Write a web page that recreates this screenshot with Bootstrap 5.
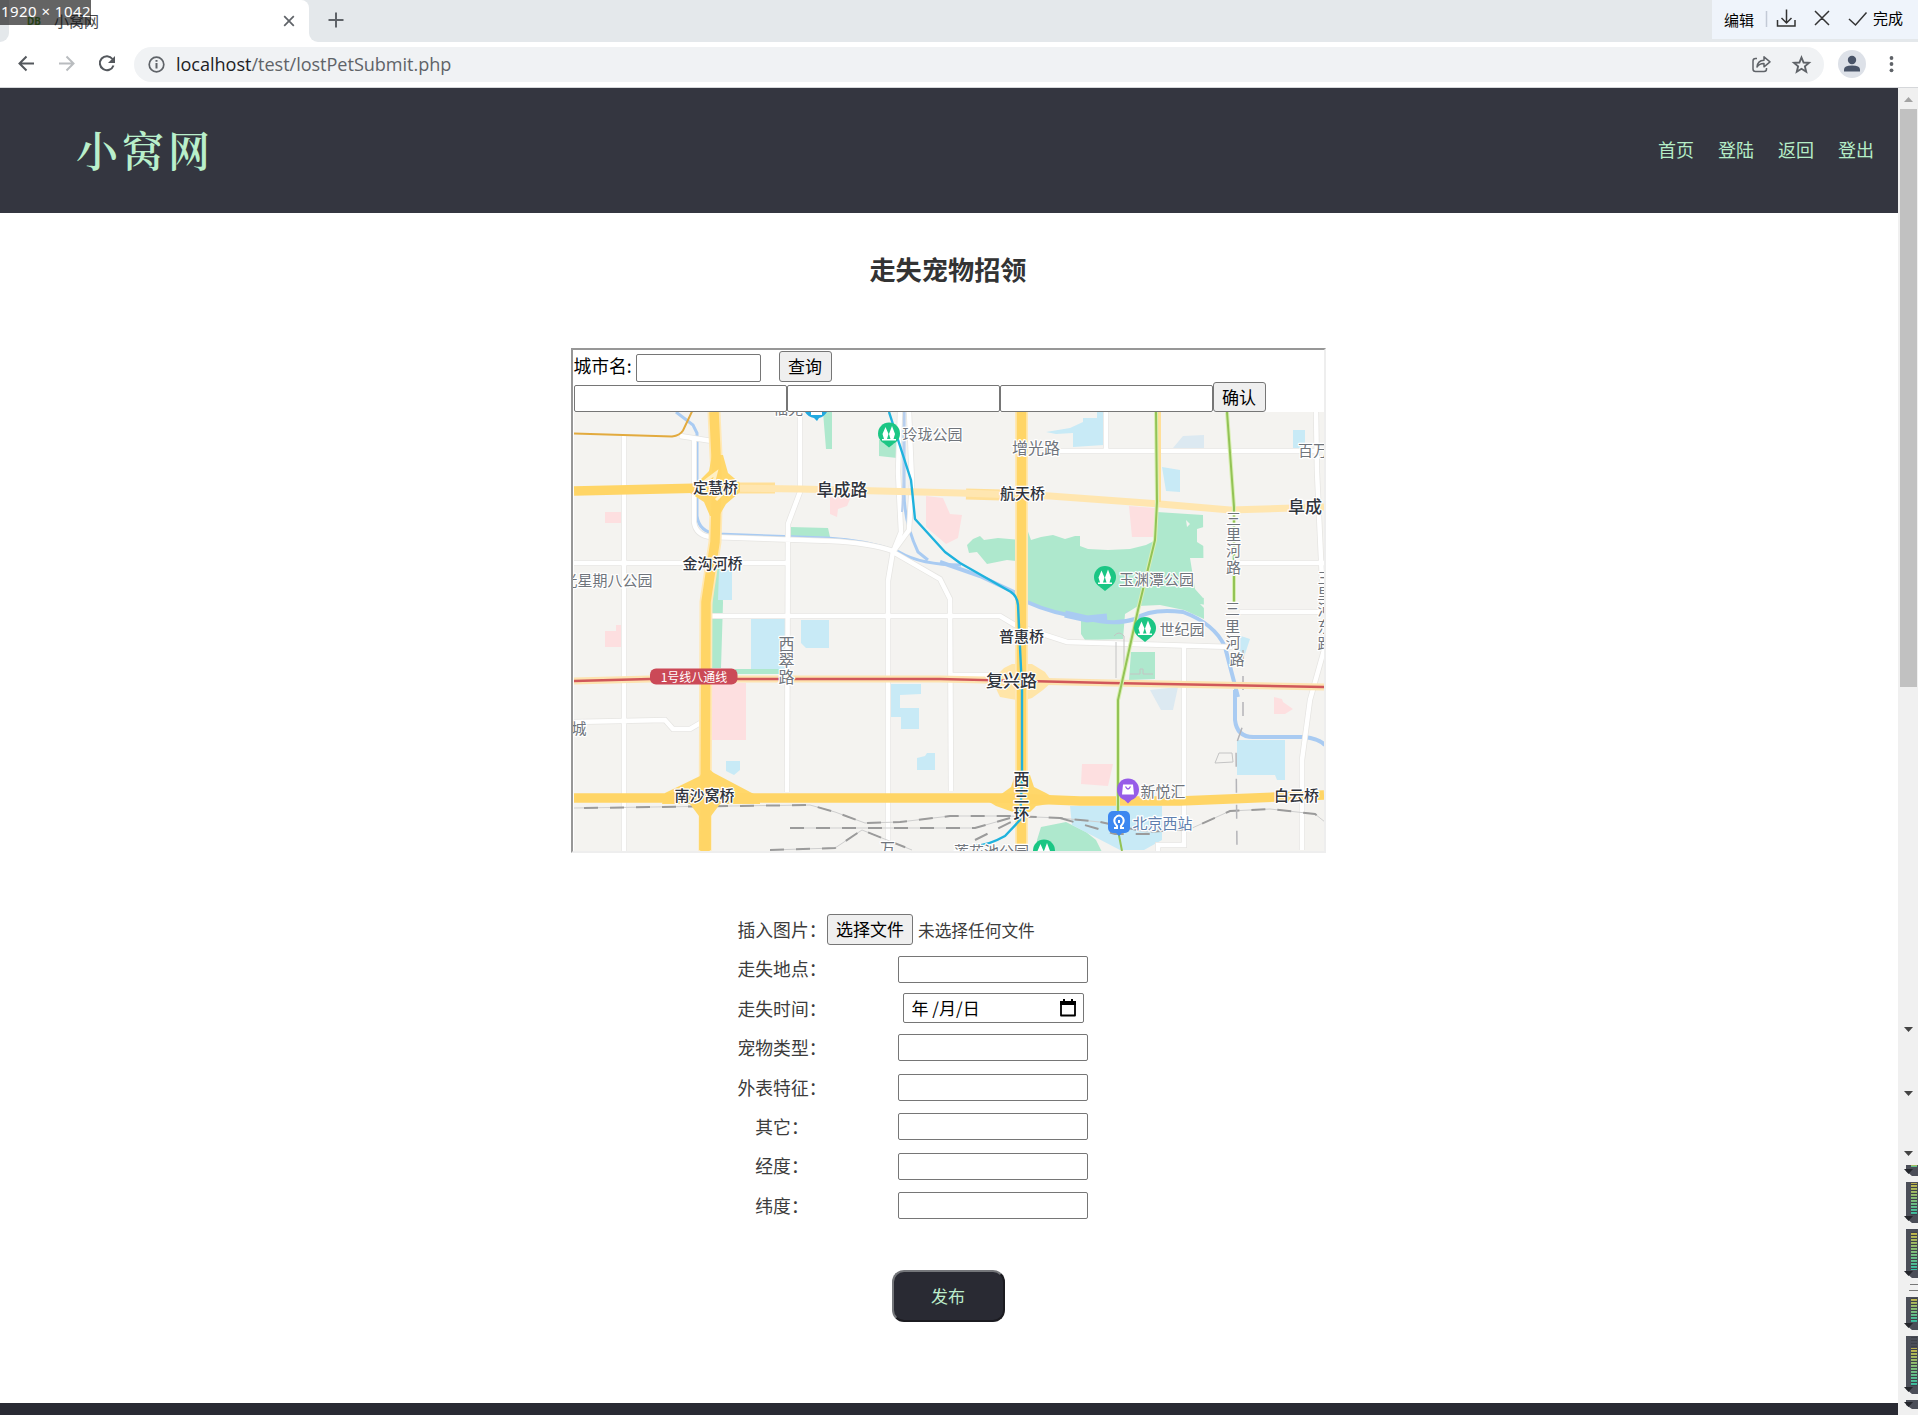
<!DOCTYPE html>
<html lang="zh-CN">
<head>
<meta charset="utf-8">
<title>小窝网</title>
<link href="https://cdn.jsdelivr.net/npm/bootstrap@5.3.0/dist/css/bootstrap.min.css" rel="stylesheet">
<style>
body{font-family:"Open Sans","Noto Sans CJK SC",sans-serif;background:#fff;height:1415px;overflow:hidden;color:#000;line-height:1.2}
svg{display:block}
.cjk{font-family:"Noto Sans CJK SC",sans-serif;font-weight:400}
.tabstrip{height:42px;background:#e4e8eb}
.strip-left{width:9px;background:#fff}
.strip-left i{display:block;height:42px;background:#e4e8eb;border-bottom-right-radius:9px}
.tab-active{width:300px;background:#fff;border-top-right-radius:8px;padding:0 14px 0 18px}
.strip-rest{background:#fff}
.strip-rest>div{height:42px;background:#e4e8eb;border-bottom-left-radius:9px;padding:12px 0 0 19px}
.fav{font:bold 10px "Noto Sans",sans-serif;color:#4f9a1c;width:27px}
.tab-title{font-size:15px;color:#45484c}
.toolbar{height:46px;border-bottom:1px solid #d5d7da}
.omni{width:1690px;height:35px;border-radius:18px;background:#f0f2f4;margin-top:5px}
.url{font-size:18.1px;color:#5f6368;letter-spacing:-.04px}
.url b{font-weight:400;color:#202124}
.size-tag{left:0;top:0;width:91px;height:25px;background:rgba(20,20,20,.66);color:#fff;font:15px/22px "Noto Sans",sans-serif;white-space:nowrap;letter-spacing:.45px;padding-left:1px}
.grab{right:0;top:0;width:206px;height:39px;background:#eff4fb;font-size:15px;color:#000}
.site-head{height:125px;background:#343640;padding:0 24px 2px 76px}
.brand{font-family:"Noto Serif CJK SC","Noto Serif SC","Noto Sans CJK SC",serif;font-size:42px;letter-spacing:4px;color:#b9efcb;font-weight:600}
.site-head a{color:#b5edc7;font-size:18px;text-decoration:none}
.page-col{width:1898px;height:1327px}
.page-body{padding-right:2px}
.page-title{font:bold 26.2px/36px "Noto Sans CJK SC",sans-serif;color:#333;margin:38px 0 0}
.map-frame{width:755px;height:505px;margin:61px auto 0;border:solid;border-width:2px;border-color:#979797 #eee #eee #979797}
.inp{border:1px solid #767676;border-radius:2px;background:#fff;padding:0;display:block;font-size:16px}
.gbtn{border:1px solid #767676;border-radius:3px;background:#efefef;color:#000;font-size:17px;line-height:1;padding:0 0 2px;white-space:nowrap}
.row-city{height:32px;padding-left:1px;font-size:17.8px}
.row-coord{height:30px;padding-left:1px}
.f-wrap{width:422px;margin:57px auto 0}
.f-row{height:39.4px}
.f-label{width:90px;font-size:17.8px;color:#3c3c3c;text-align:center;white-space:nowrap}
.f-field{width:332px}
.f-field .inp{width:190px;height:27px}
.f-field .datebox{width:181px;height:30px;font-size:17px;padding:0 7px 0 8px}
.send{width:113px;height:52px;border-radius:12px;background:#292a33;border:2px solid;border-color:#74767a #1b1b20 #1b1b20 #74767a;color:#bdeccb;font-size:17px;margin-top:45px}
.foot{height:12px;background:#292a33}
.map-svg text{font-family:"Noto Sans CJK SC",sans-serif;font-size:15px;fill:#70757c;paint-order:stroke;stroke:#fff;stroke-width:2.4px;stroke-linejoin:round;font-weight:400}
.map-svg .dk{fill:#30343c;font-weight:500}
.map-svg .big{font-size:17px}
</style>
<script src="https://cdn.jsdelivr.net/npm/bootstrap@5.3.0/dist/js/bootstrap.bundle.min.js"></script>
</head>
<body>
<div class="tabstrip d-flex position-relative">
  <div class="strip-left"><i></i></div>
  <div class="tab-active d-flex align-items-center cjk">
    <span class="fav">DB</span><span class="tab-title">小窝网</span>
    <svg class="ms-auto" width="12" height="12" viewBox="0 0 12 12" stroke="#5f6368" stroke-width="1.7"><path d="M1.2 1.2l9.6 9.6M10.8 1.2l-9.6 9.6"/></svg>
  </div>
  <div class="strip-rest flex-grow-1"><div>
    <svg width="16" height="16" viewBox="0 0 16 16" stroke="#5f6368" stroke-width="2"><path d="M8 .5v15M.5 8h15"/></svg>
  </div></div>
  <div class="size-tag position-absolute">1920 × 1042</div>
  <div class="grab position-absolute d-flex cjk">
    <span style="margin:11px 0 0 12px">编辑</span>
    <svg width="92" height="39" viewBox="1753 0 92 39" fill="none" stroke="#333" stroke-width="1.5" style="margin-left:-1px"><path d="M1766.500 11v16" stroke="#c3cad6"/><path d="M1777.500 20v6h17.500v-6M1786.500 9.500v13M1781.500 18l5 5 5-5M1815 11l14 14M1829 11l-14 14"/></svg>
    <svg width="28" height="39" viewBox="1845 0 28 39" fill="none" stroke="#333" stroke-width="1.5"><path d="M1849 19l6.500 6 11-12.500"/></svg>
    <span style="margin:9px 0 0 0">完成</span>
  </div>
</div>
<div class="toolbar d-flex">
  <svg width="134" height="45" viewBox="0 42 134 45" fill="none" stroke="#54585d" stroke-width="2"><path d="M34 63.500H20M26.500 56.500l-7 7 7 7"/><path stroke="#b9bcbf" d="M59 63.500h14M66.500 56.500l7 7-7 7"/><path d="M112.500 59a7 7 0 1 0 1 6.500"/><path d="M115 56v7h-7z" fill="#54585d" stroke="none"/></svg>
  <div class="omni d-flex align-items-center">
    <svg width="42" height="35" viewBox="134 47 42 35" fill="none" stroke="#5f6368" stroke-width="1.700"><circle cx="156.500" cy="64.500" r="7.300"/><path d="M156.500 63v5.500M156.500 60v1.800" stroke-width="2"/></svg>
    <span class="url"><b>localhost</b>/test/lostPetSubmit.php</span>
    <svg class="ms-auto" width="80" height="35" viewBox="1744 47 80 35" fill="none" stroke="#5f6368" stroke-width="1.500" stroke-linejoin="round"><path d="M1757 58.500h-1.500q-2.500 0-2.500 2.500v8q0 2.500 2.500 2.500h8.500q2.500 0 2.500-2.500v-1"/><path d="M1757 67q.5-6.500 7-6.800v-3.400l6 5-6 5v-3.300q-4.500-.2-7 3.500z"/><path stroke-width="1.900" stroke-linejoin="miter" d="M1801.500 57.500l2.100 5 5.400.4-4.100 3.500 1.300 5.300-4.700-2.900-4.700 2.900 1.300-5.300-4.100-3.500 5.400-.4z"/></svg>
  </div>
  <svg width="94" height="45" viewBox="1824 42 94 45"><circle cx="1852" cy="64" r="14" fill="#dde1e8"/><circle cx="1852" cy="60" r="4.200" fill="#495468"/><path d="M1844 71.500v-2q0-4 8-4t8 4v2z" fill="#495468"/><g fill="#5f6368"><circle cx="1891.500" cy="58" r="1.900"/><circle cx="1891.500" cy="64" r="1.900"/><circle cx="1891.500" cy="70.300" r="1.900"/></g></svg>
</div>
<div class="d-flex">
<div class="page-col d-flex flex-column">
  <header class="site-head d-flex align-items-center justify-content-between">
    <span class="brand">小窝网</span>
    <nav class="d-flex gap-4 cjk"><a href="#">首页</a><a href="#">登陆</a><a href="#">返回</a><a href="#">登出</a></nav>
  </header>
  <main class="page-body d-flex flex-column">
  <h1 class="page-title text-center">走失宠物招领</h1>
  <div class="map-frame">
    <div class="row-city d-flex cjk align-items-start">
      <span style="margin-top:5px;width:62px">城市名:</span><input class="inp" style="width:125px;height:28px;margin-top:4px">
      <button class="gbtn cjk" style="width:53px;height:31px;margin:1px 0 0 18px">查询</button>
    </div>
    <div class="row-coord d-flex cjk align-items-end">
      <input class="inp" style="width:213px;height:27px"><input class="inp" style="width:213px;height:27px"><input class="inp" style="width:213px;height:27px">
      <button class="gbtn cjk" style="width:53px;height:30px">确认</button>
    </div>
    <svg class="map-svg" width="751" height="439" viewBox="573 412 751 439">
      <rect x="574" y="412" width="751" height="439" fill="#f4f3f0"/>
      <g fill="#aee8cd">
        <path d="M823 412h9v37h-6zM879 440h18v18l-18-2zM790 527l38 1 2 9-40-1zM715 568h7l1 35-2 65h-11l2-63zM735 669h50v5h-50z"/>
        <path d="M967 545l6-6 7-3 4 4 14-2 22 2 6-14 5 14 10-3 12-2 12 4 10-3 5 0v10l8 3 20 1 22-1 16-4 8-4 3-29 46 3 1 104-20-9-24-5-22 1-13 8-2 25-38 1-4-6v-17l-20-2-37-15v-38l-17-2-20 4-10-12-8 1z"/>
        <path d="M1131 652h24v27l-26 1zM1041 827l25-5 20 10 10 8 6 12h-65v-12z"/>
      </g>
      <g fill="#f4f3f0"><path d="M1197 529l10-3 9 2 1 14-12 5-8-5zM1190 558l30 0-1 36-16 4-8-9zM1200 604l12 2 8 6-10 2zM1186 520l4 4-3 3z"/></g>
      <g fill="#c8eaf6">
        <path d="M719 570h13v30h-14zM1046 432l24-4 13-6v-4h14v-6h7v33l-31 2v-14l-17 1zM1162 467l18 3v22l-14-1zM1293 430h12v18h-12zM751 619h34v50h-34zM801 620h28v28h-23l-5-5zM891 684h30v10l-21 1v13h19v21h-18v-12h-10zM726 761h14v9l-6 5-8-4zM917 758l8-2 2-3h8v17h-18zM1237 740h48v40h-8l-2-5h-38zM1070 806h92v34l-18 10h-24l-48-25zM1238 635l12 4-6 18h-6z"/>
      </g>
      <path d="M1173 448l10-12 21-1v14h-20zM1150 690l28-3-5 23h-12z" fill="#dce9f1"/>
      <g fill="#fddfe0"><path d="M605 512h18v11h-18zM830 497h21l-4 9-9 3-1 8-7-3zM926 496l17 2 7 16 12 1-4 23-12 6-20-17zM1129 506l26 2-2 29h-21zM605 631h11v-6h7v22h-18zM712 683h34v57h-34zM1274 697l8 2 1 3 10 7-8 5h-11zM1082 764h31l-5 22-27-2z"/></g>
      <g fill="none" stroke="#a9cbf2" stroke-width="3">
        <path d="M676 412l17 13 4 8v83q2 16 20 18l110 4q40 2 72 14 22 13 62 13M904 412v80q0 30 14 60l10 8M1011 592l16 10"/>
        <path d="M940 562l40 14 38 18" stroke-width="4"/>
        <path d="M1027 602q26 12 60 16 26 8 48 1 16-11 48-7 32 12 42 35l13 50M1235 690v30q2 18 20 17h50q14 2 20 8" stroke-width="4"/>
        <path d="M1065 614l22 5 20-2" stroke-width="7"/>
      </g>
      <g fill="none" stroke="#e6e5e2" stroke-width="6"><path d="M624 436v415M800 412v80l-12 32-1 268M574 563h213M680 436l32 5M694 440v82q2 14 18 15l118 4q40 2 63 10l-5 30v280M900 412l-2 60 3 60-8 20 47 27 10 20 1 192M909 412l3 70-3 48-16 22M703 616h297l15 9 52 17 165 5M1184 647v198h-26v6M1106 412v37M1060 451h255M1316 412l1 60 6 130M1240 563h84M1240 612h84M1324 650l-14 50-8 60v90M574 722l91-2 8 9h17l12-7M950 675h50"/></g>
      <g fill="none" stroke="#fff" stroke-width="4.500"><path d="M624 436v415M800 412v80l-12 32-1 268M574 563h213M680 436l32 5M694 440v82q2 14 18 15l118 4q40 2 63 10l-5 30v280M900 412l-2 60 3 60-8 20 47 27 10 20 1 192M909 412l3 70-3 48-16 22M703 616h297l15 9 52 17 165 5M1184 647v198h-26v6M1106 412v37M1060 451h255M1316 412l1 60 6 130M1240 563h84M1240 612h84M1324 650l-14 50-8 60v90M574 722l91-2 8 9h17l12-7M950 675h50"/></g>
      <path d="M904 412v70l-2 30" fill="none" stroke="#b8cfee" stroke-width="2"/>
      <g fill="none" stroke="#cfcfcf" stroke-width="1"><path d="M574 808l236-3 25 7 30 11 35-1 50-6h60l50 2 40 4 46 10 44-3 40-18 40-2 45 5 25 20M790 828h185l35-10M770 850l65-2 27-18 50 20"/></g>
      <g fill="none" stroke="#9b9b9b" stroke-width="2" stroke-dasharray="14 12"><path d="M584 808l226-3 25 7 30 11 35-1 50-6h60l50 2 40 4 46 10 44-3 40-18 40-2 45 5 25 20M790 828h185l35-10M770 850l65-2 27-18 50 20M975 840l40-20M1060 818l35 10 20 6h36"/><path d="M1243 650v75l-7 20 1 105" stroke="#b4b4b8" stroke-width="1.500"/></g>
      <g fill="none" stroke="#c4c4c4"><path d="M1215 763l4-10h13l1 9zM1114 636q5-6 10 0v42M1116 642v36M1130 674h10v-5h3v5h10"/></g>
      <path d="M574 681l76-2h290l170 4 214 4" fill="none" stroke="#fde3b0" stroke-width="7"/>
      <path d="M992 680l12-12 8-4h20l13 8 7 10-9 8-11 8-10 3-22-4z" fill="#ffe5a8"/>
      <g fill="none" stroke="#ffdf98" stroke-width="11"><path d="M738 488h37M966 494l36 1"/></g>
      <path d="M720 488l80 1 160 4 90 3 110 8 70 6 94-3" fill="none" stroke="#ffe6b0" stroke-width="7"/>
      <path d="M1159.500 412v90" fill="none" stroke="#ffdf98" stroke-width="3"/>
      <g fill="none" stroke="#ffe8b5" stroke-width="13"><path d="M714 412l3 65-2 65-9 60-1 249M1021.500 412v439"/></g>
      <g fill="#ffd76a"><path d="M687 491l12-10 10-10 3-16h11l5 18 12 10v9l-14 12-7 12h-9l-6-14zM665 793l35-17 5-10 9 7 36 19 10 5v7h-40l-9 12v34h-12v-34l-9-12h-28zM1000 795l11-8 4-12h15l4 12 12 6 16 9-26 4-6 6h-17l-17-6-10-6z"/></g>
      <g fill="none" stroke="#ffd566" stroke-width="9.500"><path d="M574 491l130-3M714 412l3 65-2 65-9 60-1 249M574 798h430l76 3h100l144-6M1021.500 412v439"/></g>
      <path d="M704 482l12-9-2 8M716 500l10-10" stroke="#fff0c4" stroke-width="3" fill="none"/>
      <path d="M574 433.500l98 3q8-1 11-6l9-19" fill="none" stroke="#e2aa3e" stroke-width="2"/>
      <path d="M574 681l76-2h290l170 4 214 4" fill="none" stroke="#d0575a" stroke-width="2.400"/>
      <g fill="none" stroke="#d9efb4" stroke-width="4"><path d="M1156 412l1 90-2 38-17 70-20 90v115M1227 412l7 95v95"/></g>
      <g fill="none" stroke="#93c355" stroke-width="2"><path d="M1156 412l1 90-2 38-17 70-20 90v115l-1 10 5 26M1227 412l7 95v95"/></g>
      <path d="M889 412l22 68 4 39 30 33 15 11 51 29q6 4 7 13l4 85v90l-2 40-15 16q-16 9-30 10" fill="none" stroke="#1fb2dd" stroke-width="2.400" stroke-linejoin="round"/>
      <rect x="650" y="668.500" width="87.500" height="16" rx="6" fill="#cb4957"/>
      <text x="694" y="681.500" text-anchor="middle" style="font-size:12px;fill:#fff;stroke:none">1号线八通线</text>
      <g fill="#1bc684">
        <g id="park"><circle cx="889" cy="433.500" r="11"/><path d="M889 447.500l-5-4h10z"/><path d="M885.500 427l3 7-1.500 5h-3l-1.500-5zM892 426l3 8-1.500 5h-3l-1.500-5zM882 439h14v1.500h-14z" fill="#fff"/></g>
        <use href="#park" x="216" y="143.500"/><use href="#park" x="256" y="194.500"/><use href="#park" x="155" y="417"/>
      </g>
      <path d="M805 412h22q-3 5-8 6l-2 3-3-3q-6-1-9-6z" fill="#22a9e0"/><path d="M811 412h11v3h-11z" fill="#fff"/>
      <circle cx="1128" cy="789.500" r="11" fill="#965ce8"/><path d="M1128 803.500l-4-4h8z" fill="#965ce8"/><path d="M1123 784.500h10l1 10h-12z" fill="#fff"/><path d="M1125.500 786.500q2.500 5 5 0" stroke="#965ce8" fill="none" stroke-width="1.300"/>
      <rect x="1108" y="811" width="22" height="22" rx="5" fill="#3c87f0"/><path d="M1119 836l-4-4h8z" fill="#3c87f0"/><path d="M1114 828h3v-2q-4-4-2-8 4-5 8 0 2 4-2 8v2h3M1119 820v3" stroke="#fff" fill="none" stroke-width="2"/>
      <g transform="translate(-1 0)">
      <g text-anchor="middle">
        <text class="dk" x="716.500" y="492.500">定慧桥</text><text class="dk big" x="843" y="495.500">阜成路</text><text class="dk" x="713.500" y="568.500">金沟河桥</text>
        <text class="dk" x="1023.500" y="498.500">航天桥</text><text class="dk big" x="1306" y="513">阜成</text>
        <text class="dk" x="1022.500" y="641.500">普惠桥</text><text class="dk big" x="1012.500" y="686.500">复兴路</text><text class="dk" x="705.500" y="800.500">南沙窝桥</text><text class="dk" x="1297.500" y="801">白云桥</text>
        <text x="1037" y="453.500" style="font-size:16px">增光路</text>
        <text style="font-size:16px"><tspan x="787.500" y="650">西</tspan><tspan x="787.500" y="666">翠</tspan><tspan x="787.500" y="683">路</tspan></text>
        <text class="dk" style="font-size:16px"><tspan x="1022.500" y="785">西</tspan><tspan x="1022.500" y="802">三</tspan><tspan x="1022.500" y="820">环</tspan></text>
        <text style="font-size:15px"><tspan x="1234.500" y="524">三</tspan><tspan x="1234.500" y="540">里</tspan><tspan x="1234.500" y="556">河</tspan><tspan x="1234.500" y="573">路</tspan><tspan x="1233.500" y="614">三</tspan><tspan x="1233.500" y="632">里</tspan><tspan x="1234" y="648">河</tspan><tspan x="1238" y="665">路</tspan></text>
        <text style="font-size:15px"><tspan x="1326" y="583">三</tspan><tspan x="1326" y="599">里</tspan><tspan x="1326" y="615">河</tspan><tspan x="1326" y="632">东</tspan><tspan x="1326" y="649">路</tspan></text>
      </g>
      <text x="903.500" y="439.500">玲珑公园</text><text x="563.500" y="586">光星期八公园</text><text x="572.500" y="733.500">城</text>
      <text x="1120" y="584.500">玉渊潭公园</text><text x="1160.500" y="635">世纪园</text><text x="1299" y="456">百万</text>
      <text x="1141.500" y="797">新悦汇</text><text x="1133.500" y="829" style="fill:#5f7fae">北京西站</text>
      <text x="955" y="857">莲花池公园</text><text x="881" y="854">万</text><text x="774" y="414">福苑</text>
      </g>
    </svg>
  </div>
  <div class="f-wrap cjk">
    <div class="f-row d-flex align-items-center"><div class="f-label">插入图片：</div><div class="f-field d-flex align-items-center"><button class="gbtn cjk" style="width:86px;height:31px">选择文件</button><span style="font-size:16.7px;margin-left:5px;color:#3c3c3c">未选择任何文件</span></div></div>
    <div class="f-row d-flex align-items-center"><div class="f-label">走失地点：</div><div class="f-field d-flex justify-content-center"><input class="inp"></div></div>
    <div class="f-row d-flex align-items-center"><div class="f-label">走失时间：</div><div class="f-field d-flex justify-content-center"><div class="inp datebox d-flex align-items-center justify-content-between"><span>年 /月/日</span><svg width="16" height="18" viewBox="0 0 16 18"><path d="M1 3h14v13.500H1z" fill="none" stroke="#000" stroke-width="1.800" stroke-linejoin="round"/><path d="M0 2h16v4H0zM3 0h2v3H3zM11 0h2v3h-2z"/></svg></div></div></div>
    <div class="f-row d-flex align-items-center"><div class="f-label">宠物类型：</div><div class="f-field d-flex justify-content-center"><input class="inp"></div></div>
    <div class="f-row d-flex align-items-center"><div class="f-label">外表特征：</div><div class="f-field d-flex justify-content-center"><input class="inp"></div></div>
    <div class="f-row d-flex align-items-center"><div class="f-label">其它：</div><div class="f-field d-flex justify-content-center"><input class="inp"></div></div>
    <div class="f-row d-flex align-items-center"><div class="f-label">经度：</div><div class="f-field d-flex justify-content-center"><input class="inp"></div></div>
    <div class="f-row d-flex align-items-center"><div class="f-label">纬度：</div><div class="f-field d-flex justify-content-center"><input class="inp"></div></div>
  </div>
  <button class="send cjk mx-auto">发布</button>
  </main>
  <footer class="foot mt-auto"></footer>
</div>
<svg width="20" height="1327" viewBox="1898 88 20 1327">
  <defs><pattern id="st" width="6" height="3" patternUnits="userSpaceOnUse"><path d="M0 2.500h6" stroke="#3d4048" stroke-width="1.200"/></pattern>
  <linearGradient id="lv" x2="0" y2="1"><stop offset="0" stop-color="#c9b84a"/><stop offset=".55" stop-color="#7fc27f"/><stop offset="1" stop-color="#37c0a5"/></linearGradient></defs>
  <path fill="#f0f0f0" d="M1898 88h20v1327h-20z"/><path fill="#c1c1c1" d="M1900 109h17v578h-17z"/><path fill="#a3a3a3" d="M1904 102l4.500-5 4.500 5z"/>
  <g fill="#4b4e58"><path d="M1906 1165h12v11h-6l-6-5zM1906 1182h12v41h-6l-6-5zM1906 1229h12v49h-6l-6-5zM1906 1297h12v33h-6l-6-5zM1906 1336h12v58h-6l-6-5zM1906 1400h12v9h-6l-6-4z"/></g>
  <path d="M1910 1284.500h8M1909 1290.500h9" stroke="#777"/>
  <g fill="url(#lv)"><path d="M1911 1165h6v2h-6z"/><path d="M1911 1183h6v32h-6z"/><path d="M1911 1232h6v38h-6z"/><path d="M1911 1298h6v24h-6z"/><path d="M1911 1348h6v38h-6z"/></g>
  <g fill="url(#st)"><path d="M1911 1183h6v32h-6zM1911 1232h6v38h-6zM1911 1298h6v24h-6zM1911 1337h6v49h-6z"/></g>
  <g fill="#444"><path id="tr" d="M1904 1027h9l-4.500 5z"/><use href="#tr" y="64"/><use href="#tr" y="124"/></g>
  <g fill="#24262c"><use href="#tr" y="142"/><use href="#tr" y="189"/><use href="#tr" y="244"/><use href="#tr" y="296"/><use href="#tr" y="360"/><use href="#tr" y="375"/></g>
</svg>
</div>
</body>
</html>
